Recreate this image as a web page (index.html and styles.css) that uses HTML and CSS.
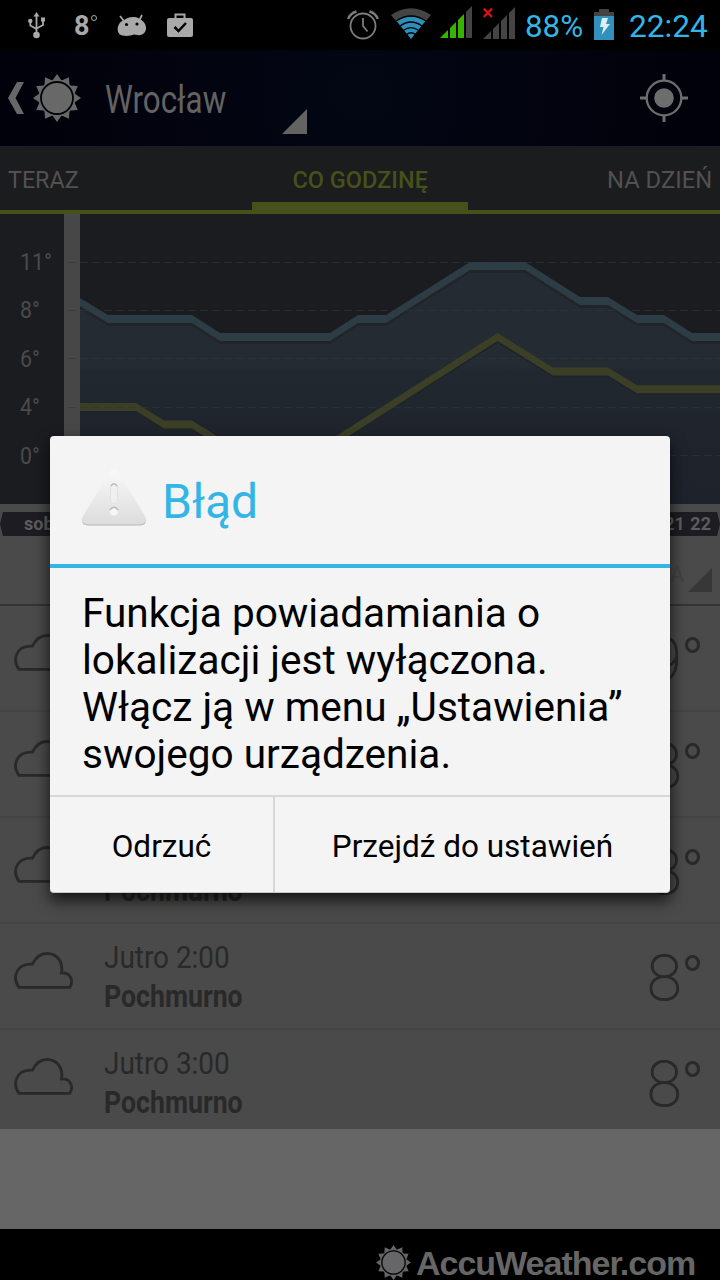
FILE: index.html
```html
<!DOCTYPE html>
<html lang="pl">
<head>
<meta charset="utf-8">
<title>AccuWeather – Wrocław</title>
<link rel="stylesheet" href="styles.css">
</head>
<body>
<svg class="defs" width="0" height="0" aria-hidden="true">
  <symbol id="sun" viewBox="-24 -24 48 48">
    <path fill="currentColor" d="M0-24 4.5-17.5 12-20.8 12.5-12.5 20.8-12 17.5-4.5 24 0 17.5 4.5 20.8 12 12.5 12.5 12 20.8 4.5 17.5 0 24-4.5 17.5-12 20.8-12.5 12.5-20.8 12-17.5 4.5-24 0-17.5-4.5-20.8-12-12.5-12.5-12-20.8-4.5-17.5Z"/>
    <circle r="18.3" fill="currentColor"/>
    <circle r="16" fill="none" stroke="#02020b" stroke-width="1.8"/>
  </symbol>
  <symbol id="cloud" viewBox="0 0 60 38">
    <path fill="none" stroke="#292929" stroke-width="2.8" d="M5 35.300C-1.500 27 1 12.500 16.500 12.200H18.500C22 4.500 27 1.500 33 1.500C43 1.500 49.500 10 47.500 21C56.500 20.500 60 28.500 55.800 35.300Z"/>
  </symbol>
</svg>
<div class="screen">
  <div class="status">
    <div class="status-left">
      <svg class="usb" width="20" height="28" viewBox="0 0 20 28"><g fill="none" stroke="#a9a9a9" stroke-width="1.8"><path d="M9.500 3V23M3.300 9V13.500L9.500 17M16 8V13L9.500 16.500"/></g><g fill="#a9a9a9"><path d="M9.500 0 12.500 4.500H6.500Z"/><circle cx="3.300" cy="9" r="2.200"/><path d="M14 5.500h4v4h-4z"/><circle cx="9.500" cy="23" r="3.300"/></g></svg>
      <span class="status-temp">8<i></i></span>
      <svg class="droid" width="30" height="24" viewBox="0 0 30 24"><path d="M3 2 7 7M25 1 22.500 6" stroke="#a9a9a9" stroke-width="1.700"/><path fill="#a9a9a9" d="M8 5.500C13 2.500 18 2.500 22 4.500C27 7 29.500 11 29 15C28.500 19.500 24 22 20.500 21L17 20.500C14 21.500 10 22.500 5.500 21.500C1 21 0 16 1 12.500C2 9 4 7 8 5.500Z"/><circle cx="9.500" cy="10.500" r="1.600"/><circle cx="20" cy="10" r="1.600"/></svg>
      <svg width="26" height="24" viewBox="0 0 26 24"><path d="M8.500 6V1.500H17.500V6" fill="none" stroke="#a9a9a9" stroke-width="2"/><rect y="5" width="26" height="19" rx="2" fill="#a9a9a9"/><path d="M7.500 14 11.500 18 19 10" fill="none" stroke="#000" stroke-width="2.500"/></svg>
    </div>
    <div class="status-right">
      <svg class="alarm" width="32" height="32" viewBox="0 0 32 32"><g fill="none" stroke="#7d7d7d" stroke-width="1.800"><circle cx="16" cy="18" r="12.500"/><path d="M16 10V18L20.500 23.500"/><path stroke-width="2.400" d="M1.200 11Q3 5.500 9.500 3.500M30.800 11Q29 5.500 22.500 3.500"/></g></svg>
      <svg class="wifi" width="40" height="32" viewBox="0 0 40 32"><path fill="#444" d="M0 7Q20-6.500 40 7L35 13Q20 3 5 13Z"/><path fill="#2d90ba" d="M5.500 13Q20 3.500 34.500 13L20 31Z"/><path fill="none" stroke="#000" stroke-width="1.300" d="M5 13Q20 3 35 13M9 18Q20 10 31 18M12.500 22.300Q20 17 27.500 22.300M15.500 26.500Q20 23 24.500 26.500"/></svg>
      <svg class="signal" width="32" height="32" viewBox="0 0 32 32"><path fill="#35b500" d="M0 32 8 24V32ZM10 32V22L16 16V32ZM18 32V14L24 8V32Z"/><path fill="#444" d="M26 32V6L32 0V32Z"/></svg>
      <svg class="signal2" width="32" height="32" viewBox="0 0 32 32"><path fill="#444" d="M0 32 8 24V32ZM10 32V22L16 16V32ZM18 32V14L24 8V32ZM26 32V6L32 0V32Z"/><path d="M.8 1.700 9 10M9 1.700.8 10" stroke="#d11216" stroke-width="2.400"/></svg>
      <span class="fit percent">88%</span>
      <svg class="battery" width="20" height="32" viewBox="0 0 20 32"><path fill="#444" d="M0 3H5V0H15V3H20V8H0Z"/><path fill="#3291bb" d="M0 7H20V31H0Z"/><path fill="#dceef6" d="M8 9H14L12 15H16L7.500 26 9.500 18H6Z"/></svg>
      <span class="fit clock">22:24</span>
    </div>
  </div>

  <header class="header">
    <svg class="back" width="16" height="32" viewBox="0 0 16 32"><path fill="#686868" d="M9 0H16L7.500 16 16 32H9L0 16Z"/></svg>
    <svg class="sun" width="48" height="48"><use href="#sun"/></svg>
    <span class="fit city">Wrocław</span>
    <svg class="spinner" width="25" height="25" viewBox="0 0 25 25"><path fill="#636363" d="M25 0V25H0Z"/></svg>
    <svg class="locate" width="48" height="48" viewBox="0 0 48 48"><g fill="none" stroke="#6d6d6d"><circle cx="24" cy="24" r="17.300" stroke-width="2.300"/><path stroke-width="3" d="M24 0V6M24 42V48M0 24H6M42 24H48"/></g><circle cx="24" cy="24" r="9.800" fill="#6d6d6d"/></svg>
  </header>

  <nav class="tabs">
    <div class="tab tab-start"><span class="fit t-now">TERAZ</span></div>
    <div class="tab tab-active"><span class="fit t-hour">CO GODZINĘ</span></div>
    <div class="tab tab-end"><span class="fit t-day">NA DZIEŃ</span></div>
  </nav>

  <section class="chart">
    <div class="axis">
      <span class="fit">11°</span><span class="fit">8°</span><span class="fit">6°</span><span class="fit">4°</span><span class="fit">0°</span>
    </div>
    <svg class="plot" width="656" height="290" viewBox="64 214 656 290">
      <defs>
        <linearGradient id="area" gradientUnits="userSpaceOnUse" x1="0" y1="265" x2="0" y2="504">
          <stop offset="0" stop-color="#252b33"/><stop offset=".38" stop-color="#242b32"/><stop offset=".4" stop-color="#21282f"/><stop offset=".58" stop-color="#20262e"/><stop offset=".61" stop-color="#20242c"/><stop offset="1" stop-color="#1d222c"/>
        </linearGradient>
        <path id="high" d="M80 298 108 315H192L220 333H330L358 315H386L470 262H525L580 297H608L637 315H664L692 333H720V520H80Z"/>
        <path id="low" d="M80 403H136L164 420.500H192L220 438H333L497.500 333 553 367.500H608L637 385.300H720V520H80Z"/>
      </defs>
      <rect x="64" y="214" width="16" height="290" fill="#474747"/>
      <use href="#high" fill="#2d3d45"/>
      <use href="#high" y="8" fill="#212529"/>
      <use href="#high" y="11" fill="url(#area)"/>
      <use href="#low" fill="#3b3f26"/>
      <use href="#low" y="8" fill="#1f2329"/>
      <use href="#low" y="10" fill="url(#area)"/>
      <path d="M68 262.500H720M68 310.500H720M68 358.500H720M68 407.500H720M68 455.500H720" stroke="#33363a" stroke-opacity=".6" stroke-dasharray="8 4"/>
    </svg>
  </section>

  <div class="days"><div class="ribbon"><span class="ribbon-day">sob.</span><span class="ribbon-hours">21 22</span></div></div>
  <div class="filter"><span class="fit">TEMPERATURA</span><svg width="24" height="24" viewBox="0 0 24 24"><path fill="#373737" d="M24 0V24H0Z"/></svg></div>

  <main class="list">
    <article class="row"><svg class="cloud" width="60" height="38"><use href="#cloud"/></svg><div class="info"></div><div class="temp">9<i></i></div></article>
    <article class="row"><svg class="cloud" width="60" height="38"><use href="#cloud"/></svg><div class="info"></div><div class="temp">8<i></i></div></article>
    <article class="row"><svg class="cloud" width="60" height="38"><use href="#cloud"/></svg><div class="info info-end"><span class="fit sky">Pochmurno</span></div><div class="temp">8<i></i></div></article>
    <article class="row"><svg class="cloud" width="60" height="38"><use href="#cloud"/></svg><div class="info"><span class="fit time">Jutro 2:00</span><span class="fit sky">Pochmurno</span></div><div class="temp">8<i></i></div></article>
    <article class="row"><svg class="cloud" width="60" height="38"><use href="#cloud"/></svg><div class="info"><span class="fit time">Jutro 3:00</span><span class="fit sky">Pochmurno</span></div><div class="temp">8<i></i></div></article>
  </main>
  <div class="ad"></div>
  <footer class="footer"><svg width="35" height="35"><use href="#sun"/></svg><span class="fit brand">AccuWeather.com</span></footer>

  <div class="dialog" role="alertdialog">
    <div class="dialog-title">
      <svg width="64" height="58" viewBox="0 0 64 58">
        <defs><linearGradient id="warn" x2="0" y2="1"><stop offset="0" stop-color="#f9f9f9"/><stop offset="1" stop-color="#dcdcdc"/></linearGradient></defs>
        <path fill="#b8b8b8" d="M28.500 5Q32 1 35.500 5L63 48.500Q66 56 58 56.500H6Q-2 56 1 48.500Z"/>
        <path fill="url(#warn)" d="M28.500 2Q32-2 35.500 2L63 47Q66 55 58 55.500H6Q-2 55 1 47Z"/>
        <rect x="28.500" y="14.500" width="7" height="20" rx="3.500" fill="#f0f0f0" stroke="#e2e2e2"/><path d="M29 17Q32 12.500 35 17" fill="none" stroke="#bbb" stroke-width="1.500"/>
        <circle cx="32" cy="42.500" r="4" fill="#f6f6f6"/><path d="M28 41Q32 35.500 36 41" fill="none" stroke="#b8b8b8" stroke-width="1.500"/>
      </svg>
      <h1 class="fit">Błąd</h1>
    </div>
    <div class="message">
      <span class="fit">Funkcja powiadamiania o</span>
      <span class="fit">lokalizacji jest wyłączona.</span>
      <span class="fit">Włącz ją w menu „Ustawienia”</span>
      <span class="fit">swojego urządzenia.</span>
    </div>
    <div class="actions">
      <div class="action dismiss">Odrzuć</div>
      <div class="action settings">Przejdź do ustawień</div>
    </div>
  </div>
</div>
</body>
</html>
```

FILE: styles.css
```css
* { box-sizing: border-box; }
body { margin: 0; background: #000; font-family: Roboto, "Liberation Sans", sans-serif; }
svg { display: block; flex: none; }
.defs { position: absolute; }
.screen { position: relative; width: 720px; height: 1280px; overflow: hidden; display: flex; flex-direction: column; }
.screen > * { flex: none; }
.fit { display: inline-block; white-space: nowrap; transform-origin: left center; }

/* status bar */
.status { height: 50px; display: flex; justify-content: space-between; background: #000; }
.status-left { display: flex; align-items: flex-start; padding: 12px 0 0 27px; }
.status-temp { width: 26px; margin: 0 17px 0 27px; font-size: 27px; line-height: 28px; font-weight: 700; color: #a9a9a9; display: flex; }
.status-temp i { flex: none; width: 6px; height: 6px; margin: 3px 0 0 1px; border: 1.5px solid #a9a9a9; border-radius: 50%; }
.droid { margin: 2px 20px 0 0; }
.status-left svg:last-child { margin-top: 1px; }
.status-right { display: flex; align-items: flex-start; width: 373px; padding-top: 8px; color: #33b5e5; }
.wifi { margin-left: 12px; }
.signal { margin: -2px 0 0 9px; }
.signal2 { margin: -1px 0 0 11px; }
.percent, .clock { font-size: 32px; line-height: 37px; }
.percent { width: 58px; margin-left: 10px; transform: scaleX(.98); }
.battery { margin: 1px 0 0 11px; }
.clock { margin-left: 15px; transform: scaleX(.99); }

/* action bar */
.header { height: 96px; display: flex; align-items: center; padding: 0 32px 0 8px; background: radial-gradient(circle at 50% 45%, #020713 0, #02020d 270px, #01010b 100%); }
.sun { margin-left: 9px; color: #686868; }
.city { width: 121px; margin: 3px 0 0 24px; font-size: 38px; line-height: 44px; color: #636363; transform: scaleX(.825); }
.spinner { margin: 47px auto 0 56px; }

/* tabs */
.tabs { height: 68px; display: flex; justify-content: space-between; border-bottom: 4px solid #46511a; background: #1b1c1e; font-size: 24px; line-height: 68px; color: #515151; }
.tab { width: 252px; height: 64px; }
.tab-start { padding-left: 8px; }
.tab-active { width: 216px; text-align: center; border-bottom: 8px solid #46511a; color: #46511a; font-weight: 500; }
.tab-end { padding-right: 8px; text-align: right; }
.t-now { transform: scaleX(.97); }
.t-hour { transform: scaleX(.98); transform-origin: center; }
.t-day { transform: scaleX(.99); transform-origin: right; }

/* temperature chart */
.chart { height: 290px; display: flex; background: #1b1c20; }
.axis { width: 64px; padding: 24px 0 0 20px; display: flex; flex-direction: column; font-size: 24px; line-height: 48.4px; color: #4a4a4a; }
.axis .fit { transform: scaleX(.89); }
.days { height: 36px; padding: 8px 0 4px; background: #4a4a4a; }
.ribbon { height: 24px; display: flex; justify-content: space-between; padding: 0 9px 0 24px; background: #1c1c22; clip-path: polygon(3px 0, 717px 0, 720px 50%, 717px 100%, 3px 100%, 0 50%); font-size: 18px; line-height: 24px; font-weight: 700; color: #5d5d5d; }
.ribbon-hours { word-spacing: 1px; }
.filter { height: 66px; display: flex; justify-content: flex-end; align-items: center; padding: 3px 8px 0 0; border-bottom: 2px solid #343434; background: #4a4a4a; color: #424242; font-size: 24px; }
.filter .fit { margin-right: 4px; transform: scaleX(.86); transform-origin: right; }
.filter svg { margin-top: 12px; }

/* hourly list */
.list { height: 523px; overflow: hidden; background: #4a4a4a; color: #292929; }
.row { height: 106px; display: flex; border-bottom: 2px solid #444; padding: 0 35px 0 14px; }
.cloud { margin-top: 28px; }
.info { display: flex; flex-direction: column; width: 300px; height: 78px; margin: 14px auto 0 30px; line-height: 39px; }
.info-end { justify-content: flex-end; }
.time { font-size: 31px; transform: scaleX(.9); }
.sky { font-size: 31px; font-weight: 700; transform: scaleX(.86); }
.temp { position: relative; width: 38px; margin-top: 18px; font-size: 63px; line-height: 74px; font-weight: 100; -webkit-text-stroke: 1.2px #292929; }
.temp i { position: absolute; left: 38px; top: 13px; width: 15px; height: 16px; border: 3px solid #292929; border-radius: 50%; }

.ad { height: 100px; background: #666; }
.footer { height: 51px; display: flex; align-items: flex-start; padding: 16px 0 0 376px; background: #000; color: #666; }
.brand { margin-left: 5px; font: 700 34px/36px "Liberation Sans", Arial, sans-serif; letter-spacing: -1px; }

/* alert dialog */
.dialog { position: absolute; left: 50px; top: 436px; width: 620px; height: 457px; border-radius: 4px; background: #f4f4f4; border-bottom: 1px solid #c8c8c8; box-shadow: 0 7px 16px rgba(0,0,0,.75); color: #000; }
.dialog-title { height: 132px; display: flex; padding: 33px 0 0 32px; border-bottom: 4px solid #33b5e5; }
.dialog-title h1 { margin: 3px 0 0 16px; font-size: 48px; line-height: 60px; font-weight: 400; color: #33b5e5; }
.message { height: 227px; display: flex; flex-direction: column; align-items: flex-start; padding: 22px 0 0 32px; font-size: 41px; line-height: 47px; }
.message .fit { transform: scaleX(.989); }
.actions { height: 97px; display: flex; border-top: 2px solid #d8d8d8; font-size: 31.5px; line-height: 99px; text-align: center; }
.dismiss { width: 225px; border-right: 2px solid #d8d8d8; }
.settings { flex: 1; }
```
